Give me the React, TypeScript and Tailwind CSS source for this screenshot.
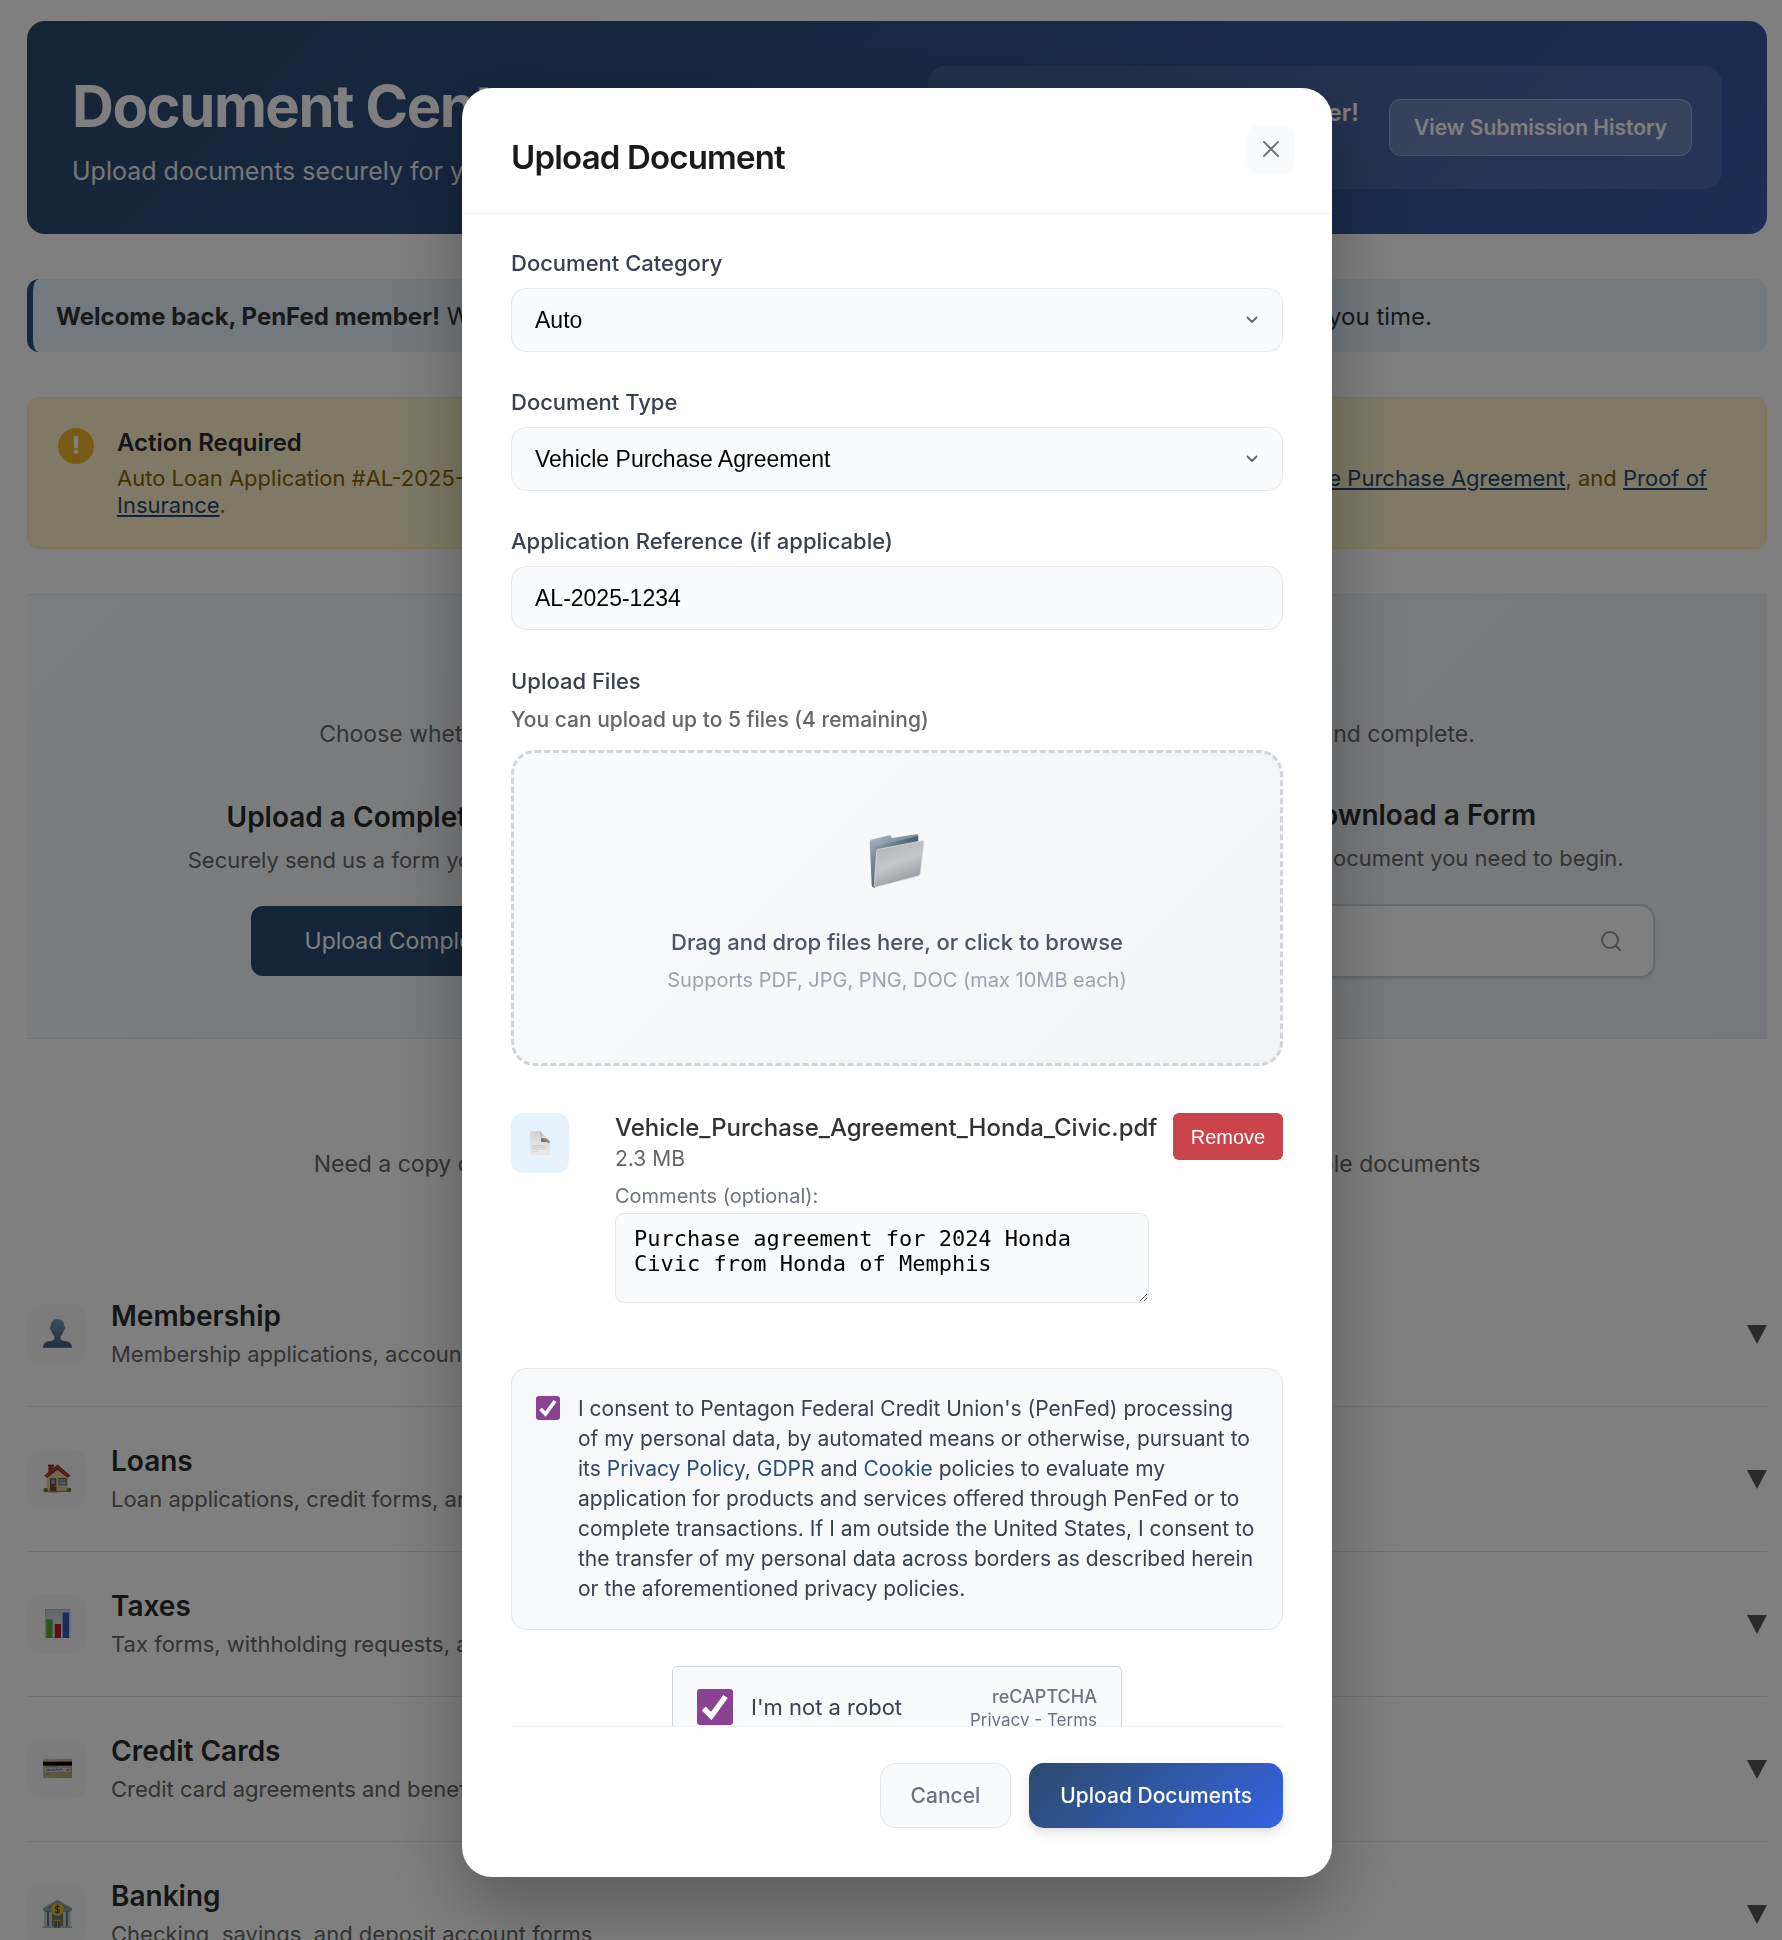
import type { ReactNode } from "react";

const UI = "font-['Inter',sans-serif]";
const ARIAL = "font-['Liberation_Sans',Arial,sans-serif]";

function PersonIcon() {
  return (
    <svg viewBox="0 0 90 90" className="size-[30px]" aria-hidden="true">
      <defs>
        <linearGradient id="person" x1="0" y1="0" x2="0" y2="1">
          <stop offset="0" stopColor="#7f9dba" />
          <stop offset="1" stopColor="#43597a" />
        </linearGradient>
      </defs>
      <path
        fill="url(#person)"
        d="M46 0c14 0 21 10 21 22 2 1 3 3 2 7-1 3-2 5-4 6-2 7-5 12-9 16v9c2 5 9 5 17 7 10 2 16 7 17 19H3c1-12 7-17 17-19 8-2 15-2 17-7v-9c-4-4-7-9-9-16-2-1-3-3-4-6-1-4 0-6 2-7C26 10 33 0 46 0Z"
      />
    </svg>
  );
}

function HouseIcon() {
  return (
    <svg viewBox="0 0 90 90" className="size-[30px]" aria-hidden="true">
      <path d="M19 3h16v26H19z" fill="#a33a30" />
      <path d="M18 2h18v4H18z" fill="#6e221c" />
      <path d="M14 38 46 10l32 28v46H14z" fill="#dccba4" />
      <path d="M14 80h64v4H14z" fill="#9c8b6c" />
      <path d="M6 35 45 2h3l38 33-5 4-35-28-34 28z" fill="#b23c33" />
      <path d="m12 39 34-28 35 28-3 2-32-24-31 24z" fill="#6e2a24" />
      <path d="M24 43h19v39H24z" fill="#7a4326" />
      <path d="M28 47h11v13H28z" fill="#7fa9cf" />
      <circle cx="39" cy="66" r="2" fill="#f2c23c" />
      <path d="M49 42h25v22H49z" fill="#8d6240" />
      <path d="M52 45h19v16H52z" fill="#6f9fd0" />
      <path d="M52 55h19v6H52z" fill="#93bfe2" />
      <path d="M20 82h26v4H20z" fill="#8e8e8e" />
      <circle cx="11" cy="78" r="7" fill="#5c8a35" />
      <circle cx="81" cy="78" r="7" fill="#5c8a35" />
    </svg>
  );
}

function ChartIcon() {
  return (
    <svg viewBox="0 0 90 90" className="size-[30px]" aria-hidden="true">
      <defs>
        <linearGradient id="chartbg" x1="0" y1="0" x2="0" y2="1">
          <stop offset="0" stopColor="#c3cfdc" />
          <stop offset="1" stopColor="#f0f2f5" />
        </linearGradient>
      </defs>
      <rect x="9" y="0" width="76" height="87" fill="#aab4bf" />
      <rect x="11" y="2" width="72" height="83" fill="url(#chartbg)" />
      <rect x="13" y="31" width="19" height="56" fill="#4fae35" />
      <rect x="38" y="45" width="19" height="42" fill="#b3261c" />
      <rect x="62" y="11" width="19" height="76" fill="#2a5cb8" />
    </svg>
  );
}

function CardIcon() {
  return (
    <svg viewBox="0 0 90 90" className="size-[30px]" aria-hidden="true">
      <defs>
        <linearGradient id="card" x1="0" y1="0" x2="1" y2="1">
          <stop offset="0" stopColor="#d6cf9e" />
          <stop offset="1" stopColor="#a89f6e" />
        </linearGradient>
      </defs>
      <rect x="3" y="14" width="87" height="58" rx="4" fill="url(#card)" />
      <rect x="3" y="23" width="87" height="12" fill="#000" />
      <rect x="10" y="42" width="74" height="12" fill="#cfcfd6" />
      <path d="m13 52 5-7 3 6 5-5 4 5 6-6 3 5 6-6 4 6 6-6 7 4" fill="none" stroke="#5566b8" strokeWidth="3" />
      <path d="M73 48h8" stroke="#555" strokeWidth="3" />
      <path d="M10 38h36M12 60h14" stroke="#837b54" strokeWidth="2" />
    </svg>
  );
}

function BankIcon() {
  return (
    <svg viewBox="0 0 90 90" className="size-[30px]" aria-hidden="true">
      <rect x="8" y="34" width="76" height="48" fill="#65737a" />
      <path d="M46 2 90 27v9H3v-9z" fill="#93a5ad" />
      <path d="M46 7 78 27H14z" fill="#6f8188" />
      <path d="M6 38h9v44H6zM21 38h9v44h-9zM63 38h9v44h-9zM78 38h9v44h-9z" fill="#c4ced2" />
      <rect x="34" y="62" width="24" height="24" fill="#d6a92d" />
      <path d="M37 66h8v20h-8zM48 66h7v20h-7z" fill="#4c6674" />
      <path d="M2 82h32v5H2zM58 82h32v5H58z" fill="#a8b3b8" />
      <circle cx="46" cy="31" r="20" fill="#dcae28" />
      <circle cx="46" cy="31" r="16" fill="#e8c040" />
      <path d="M53 24c-2-4-13-4-13 2 0 7 13 3 13 10 0 6-12 6-14 1M46 17v28" fill="none" stroke="#544510" strokeWidth="3.5" />
    </svg>
  );
}

function FolderIcon() {
  return (
    <svg viewBox="86 72 168 168" className="size-14" aria-hidden="true">
      <defs>
        <linearGradient id="fback" x1="0" y1="0" x2="0.5" y2="1">
          <stop offset="0" stopColor="#b4c0ca" />
          <stop offset="0.35" stopColor="#7e8f9e" />
          <stop offset="1" stopColor="#4b5b69" />
        </linearGradient>
        <linearGradient id="finner" x1="0" y1="0" x2="1" y2="0">
          <stop offset="0" stopColor="#8798a6" />
          <stop offset="1" stopColor="#4a5c6c" />
        </linearGradient>
        <linearGradient id="ffront" x1="0.2" y1="0" x2="0.6" y2="1">
          <stop offset="0" stopColor="#b0b5ba" />
          <stop offset="0.5" stopColor="#c4c7ca" />
          <stop offset="1" stopColor="#8f949a" />
        </linearGradient>
      </defs>
      <path d="M92 92 147 79q4-1 5 3l3 5 75-11q4 0 4 4v40L103 236q-8 0-9-9L88 98q0-5 4-6Z" fill="url(#fback)" />
      <path d="m106 112 126-30 2 18-122 26-10 90Z" fill="url(#finner)" />
      <path d="M115 121 245 95q7-1 6 6l-11 92q-1 6-7 8l-124 33q-7 1-7-5l7-101q1-6 6-7Z" fill="url(#ffront)" stroke="#e3e6e9" strokeWidth="2" />
    </svg>
  );
}

function PageIcon() {
  return (
    <svg viewBox="0 0 60 72" className="h-6 w-5" aria-hidden="true">
      <defs>
        <linearGradient id="page" x1="0" y1="0" x2="0" y2="1">
          <stop offset="0" stopColor="#d3d3d3" />
          <stop offset="1" stopColor="#ececec" />
        </linearGradient>
        <linearGradient id="curl" x1="1" y1="0" x2="0" y2="1">
          <stop offset="0" stopColor="#d8d8d8" />
          <stop offset="0.5" stopColor="#8d8d8d" />
          <stop offset="1" stopColor="#4c4c4c" />
        </linearGradient>
      </defs>
      <path d="M1 1h29l29 28v42H1z" fill="url(#page)" stroke="#cfcfcf" />
      <path d="M30 1c6 5 5 14 3 21 8-2 20 0 26 9v6c-9-5-16-4-25-4-2-10 0-22-4-32Z" fill="url(#curl)" />
      <path d="M7 44h44M7 49h44M7 54h40M7 62h14" stroke="#c4c4c4" strokeWidth="2" />
    </svg>
  );
}

const categories: { title: string; text: string; icon: ReactNode }[] = [
  { title: "Membership", text: "Membership applications, account updates, and more", icon: <PersonIcon /> },
  { title: "Loans", text: "Loan applications, credit forms, and agreements", icon: <HouseIcon /> },
  { title: "Taxes", text: "Tax forms, withholding requests, and statements", icon: <ChartIcon /> },
  { title: "Credit Cards", text: "Credit card agreements and benefits", icon: <CardIcon /> },
  { title: "Banking", text: "Checking, savings, and deposit account forms", icon: <BankIcon /> },
];

function Page() {
  const link = "text-[#25486f] underline underline-offset-2 decoration-2";
  return (
    <main className="flex flex-col pt-[21px] pr-[15px] pl-[27px] text-[#333]">
      <header className="flex justify-between gap-10 rounded-[18px] bg-linear-135 from-[#2c4a6b] via-[#304f8c] to-[#3a5ba8] p-[45px]">
        <div className="flex flex-col justify-center pt-[6px]">
          <h1 className="text-[58px] leading-[68px] font-bold tracking-tight text-white">Document Center</h1>
          <p className="mt-[13px] text-[25px] leading-9 text-white/90">Upload documents securely for your accounts</p>
        </div>
        <div className="flex w-[794px] items-center justify-end gap-[30px] rounded-[18px] bg-white/10 px-[30px] py-[30px]">
          <div className="flex flex-col items-start">
            <p className="text-[24px] leading-[34px] font-semibold text-white">Welcome, PenFed Member!</p>
            <p className="text-xl leading-[29px] text-white/80">Member since 2019</p>
          </div>
          <button type="button" className="h-[57px] shrink-0 rounded-xl border border-white/30 bg-white/20 px-6 text-[21px] font-semibold text-white">
            View Submission History
          </button>
        </div>
      </header>

      <section className="mt-[45px] flex h-[73px] items-center rounded-xl border-l-[6px] border-[#2c5282] bg-[#e6f4ff] pt-[2px] pl-[23px] text-[24px] text-[#333]">
        <p className="whitespace-nowrap">
          <strong className="font-bold">Welcome back, PenFed member!</strong> We have pre-filled some of your personal details in the forms in order to save you time.
        </p>
      </section>

      <section className="mt-[45px] flex gap-[23px] rounded-xl border border-[#ffeaa7] bg-[#fff3cd] px-[30px] py-[29px]">
        <span className="mt-px flex size-9 shrink-0 items-center justify-center rounded-full bg-[#f0b429] text-[24px] font-extrabold text-white">!</span>
        <div className="min-w-0 flex-1">
          <h2 className="text-[24px] leading-[31px] font-semibold text-[#2b2b2b]">Action Required</h2>
          <div className="mt-[7px] text-[22px] leading-[27px] text-[#856404]">
            <div className="flex justify-between pr-[29px]">
              <span>Auto Loan Application #AL-2025-1234 is missing documents:</span>
              <span>
                <a href="#purchase" className={link}>Vehicle Purchase Agreement</a>, and <a href="#insurance" className={link}>Proof of</a>
              </span>
            </div>
            <a href="#insurance" className={link}>Insurance</a>.
          </div>
        </div>
      </section>

      <section className="mt-[45px] border-y border-[#e2e8f0] bg-linear-135 from-[#f8fafc] to-[#eef1f6] pt-[122px] pb-[60px]">
        <p className="text-center text-[23px] leading-[34px] text-[#666]">
          Choose whether to upload a form you have already signed or find a blank form to download and complete.
        </p>
        <div className="mx-5 mt-[46px] grid grid-cols-2 items-center gap-[140px] text-center">
          <div className="flex flex-col items-center">
            <h2 className="text-[28px] leading-9 font-semibold whitespace-nowrap text-[#2b2b2b]">Upload a Completed Document</h2>
            <p className="mt-[9px] text-[22px] leading-8 whitespace-nowrap text-[#666]">Securely send us a form you've already filled in.</p>
            <button type="button" className="mt-[30px] h-[70px] w-[372px] rounded-xl bg-[#2a4b72] text-[23px] text-white">Upload Completed Form</button>
          </div>
          <div className="flex flex-col items-center">
            <h2 className="text-[28px] leading-9 font-semibold whitespace-nowrap text-[#2b2b2b]">Find and Download a Form</h2>
            <p className="mt-[9px] text-[22px] leading-8 whitespace-nowrap text-[#666]">Search by title for the document you need to begin.</p>
            <div className="mt-[30px] flex h-[74px] w-[596px] items-center rounded-[15px] border-2 border-[#cbd5e1] bg-white pr-[30px] shadow-sm">
              <input type="search" aria-label="Search forms" className="h-full min-w-0 flex-1 bg-transparent px-6" />
              <svg viewBox="0 0 24 24" className="size-6 shrink-0" fill="none" stroke="#8f96a3" strokeWidth="2" strokeLinecap="round" aria-hidden="true">
                <circle cx="11" cy="11" r="8" />
                <path d="m21 21-4.3-4.3" />
              </svg>
            </div>
          </div>
        </div>
      </section>

      <p className="mt-[108px] mb-[81px] text-center text-[23px] leading-[34px] text-[#666]">
        Need a copy of a form or disclosure? Browse the categories below to download all our available documents
      </p>

      <ul>
        {categories.map((c) => (
          <li key={c.title} className="border-b border-[#e5e7eb]">
            <button type="button" className="flex w-full items-center gap-6 py-[42px] text-left">
              <span className="flex size-[60px] shrink-0 items-center justify-center rounded-[15px] bg-[#f8f9fa]">{c.icon}</span>
              <span className="-my-2 flex flex-1 flex-col">
                <span className="text-[28px] leading-9 font-semibold text-[#2b2b2b]">{c.title}</span>
                <span className="mt-1 text-[22px] leading-8 text-[#666]">{c.text}</span>
              </span>
              <svg viewBox="0 0 20 20" className="size-5 shrink-0" aria-hidden="true">
                <path d="M0 1h20L10 20z" fill="#555" />
              </svg>
            </button>
          </li>
        ))}
      </ul>
    </main>
  );
}

function Label({ htmlFor, children }: { htmlFor: string; children: ReactNode }) {
  return (
    <label htmlFor={htmlFor} className="block text-[22px] leading-[30px] font-medium text-[#374151]">
      {children}
    </label>
  );
}

const fieldBox = "mt-[10px] block h-16 w-full appearance-none rounded-[15px] border border-[#e5e7eb] bg-[#fafbfc] px-[23px] text-[23px] text-black";

function SelectField({ id, label, value }: { id: string; label: string; value: string }) {
  return (
    <div>
      <Label htmlFor={id}>{label}</Label>
      <div className="relative">
        <select id={id} defaultValue={value} className={`${fieldBox} ${ARIAL}`}>
          <option>{value}</option>
        </select>
        <svg viewBox="0 0 12 8" className="pointer-events-none absolute top-7 right-[25px] h-2 w-3" fill="none" stroke="#5b6472" strokeWidth="1.8" strokeLinecap="round" strokeLinejoin="round" aria-hidden="true">
          <path d="m1.5 1.5 4.5 4.5 4.5-4.5" />
        </svg>
      </div>
    </div>
  );
}

function Tick({ id, big }: { id: string; big?: boolean }) {
  return (
    <span className={big ? "relative size-9 shrink-0" : "relative mt-[2px] size-6 shrink-0"}>
      <input id={id} type="checkbox" defaultChecked className="block size-full appearance-none rounded-[3px] bg-[#8b4293]" />
      <svg viewBox="0 0 24 24" className="pointer-events-none absolute inset-0 size-full" fill="none" stroke="#fff" strokeWidth="3.6" aria-hidden="true">
        <path d="m4.5 13 5 5L19 5" />
      </svg>
    </span>
  );
}

function UploadDialog() {
  const policy = "text-[#2a4d7a]";
  return (
    <div role="dialog" aria-labelledby="dialog-title" className="flex h-full w-full max-w-[870px] flex-col rounded-[30px] bg-white shadow-[0_31px_74px_rgba(0,0,0,0.3)]">
      <div className="flex items-start justify-between border-b border-[#f3f4f6] pt-[37px] pr-[37px] pb-[38px] pl-[49px]">
        <h2 id="dialog-title" className="mt-[14px] text-[33px] leading-9 font-semibold tracking-tight text-[#1a1a1a]">Upload Document</h2>
        <button type="button" aria-label="Close" className="flex size-12 items-center justify-center rounded-xl bg-[#f9fafb]">
          <svg viewBox="0 0 18 18" className="size-4" fill="none" stroke="#6b7280" strokeWidth="2.2" strokeLinecap="round" aria-hidden="true">
            <path d="m1 1 16 16M17 1 1 17" />
          </svg>
        </button>
      </div>

      <div className="mx-[49px] flex min-h-0 flex-1 flex-col overflow-y-auto pt-[34px] [scrollbar-width:none]">
        <div className="flex flex-col gap-[35px]">
          <SelectField id="category" label="Document Category" value="Auto" />
          <SelectField id="type" label="Document Type" value="Vehicle Purchase Agreement" />
          <div>
            <Label htmlFor="reference">Application Reference (if applicable)</Label>
            <input id="reference" defaultValue="AL-2025-1234" className={`${fieldBox} ${ARIAL}`} />
          </div>
        </div>

        <div className="mt-9">
          <Label htmlFor="files">Upload Files</Label>
          <p className="mt-[9px] text-[21px] leading-[30px] font-medium text-[#666]">You can upload up to 5 files (4 remaining)</p>
        </div>
        <label className="mt-[15px] flex flex-col items-center rounded-3xl border-[3px] border-dashed border-[#d1d5db] bg-linear-135 from-[#fafbfc] to-[#f3f4f6] pt-[80px] pb-[68px]">
          <input id="files" type="file" className="sr-only" />
          <FolderIcon />
          <span className="mt-[38px] text-[22px] leading-[30px] font-medium text-[#4b5563]">Drag and drop files here, or click to browse</span>
          <span className="mt-2 text-[20px] leading-[30px] text-[#9ca3af]">Supports PDF, JPG, PNG, DOC (max 10MB each)</span>
        </label>

        <div className="mt-[47px] flex items-start">
          <span className="flex h-[60px] w-[58px] shrink-0 items-center justify-center rounded-xl bg-[#e6f3fd]">
            <PageIcon />
          </span>
          <div className="ml-[46px] min-w-0 flex-1">
            <p className="text-[24px] leading-[30px] font-medium text-[#333]">Vehicle_Purchase_Agreement_Honda_Civic.pdf</p>
            <p className="text-[21px] leading-8 text-[#666]">2.3 MB</p>
            <label htmlFor="comments" className="mt-[6px] block text-[20px] leading-[30px] text-[#6b7280]">Comments (optional):</label>
            <textarea
              id="comments"
              defaultValue="Purchase agreement for 2024 Honda Civic from Honda of Memphis"
              className="mt-[2px] block h-[90px] w-full resize rounded-[9px] border border-[#e5e7eb] bg-[#fafbfc] px-[18px] py-3 font-['DejaVu_Sans_Mono',monospace] text-[22px] leading-[25px] text-black"
            />
          </div>
          <button type="button" className={`ml-6 h-[47px] w-[110px] shrink-0 rounded-md bg-[#cc444b] text-[20px] text-white ${ARIAL}`}>
            Remove
          </button>
        </div>

        <div className="mt-[65px] flex gap-[18px] rounded-[15px] border border-[#e5e7eb] bg-[#f8f9fb] px-6 py-[25px]">
          <Tick id="consent" />
          <label htmlFor="consent" className="min-w-0 flex-1 text-[21px] leading-[30px] text-[#374151]">
            I consent to Pentagon Federal Credit Union's (PenFed) processing of my personal data, by automated means or otherwise, pursuant to its{" "}
            <a href="#privacy" className={policy}>Privacy Policy</a>, <a href="#gdpr" className={policy}>GDPR</a> and{" "}
            <a href="#cookie" className={policy}>Cookie</a> policies to evaluate my application for products and services offered through PenFed or to
            complete transactions. If I am outside the United States, I consent to the transfer of my personal data across borders as described herein
            or the aforementioned privacy policies.
          </label>
        </div>

        <div className="mx-auto mt-9 flex h-[95px] w-[450px] shrink-0 items-start rounded-[5px] border border-[#d1d5db] bg-[#f9fafb] px-6 pt-[22px]">
          <Tick id="robot" big />
          <label htmlFor="robot" className="ml-[18px] flex-1 text-[22px] leading-9 text-[#374151]">I'm not a robot</label>
          <div className="-mt-1 text-right text-[#6b7280]">
            <p className="text-[18px] leading-6 font-medium">reCAPTCHA</p>
            <p className="text-[17px] leading-[22px]">Privacy - Terms</p>
          </div>
        </div>
      </div>

      <div className="mx-[49px] flex justify-end gap-[18px] border-t border-[#f3f4f6] pt-9 pb-[49px]">
        <button type="button" className="h-[65px] rounded-[15px] border border-[#e5e7eb] bg-[#f9fafb] px-[30px] text-[21px] font-medium text-[#6b7280]">
          Cancel
        </button>
        <button type="button" className="h-[65px] rounded-[15px] bg-linear-135 from-[#2c4a6b] to-[#3662e3] px-[31px] text-[21px] font-medium text-white shadow-[0_5px_12px_rgba(0,0,0,0.12)]">
          Upload Documents
        </button>
      </div>
    </div>
  );
}

export default function App() {
  return (
    <div className={`h-screen overflow-hidden bg-white ${UI}`}>
      <Page />
      <div className="fixed inset-0 flex justify-center bg-black/50 pt-[88px] pb-[63px] pl-3">
        <UploadDialog />
      </div>
    </div>
  );
}
